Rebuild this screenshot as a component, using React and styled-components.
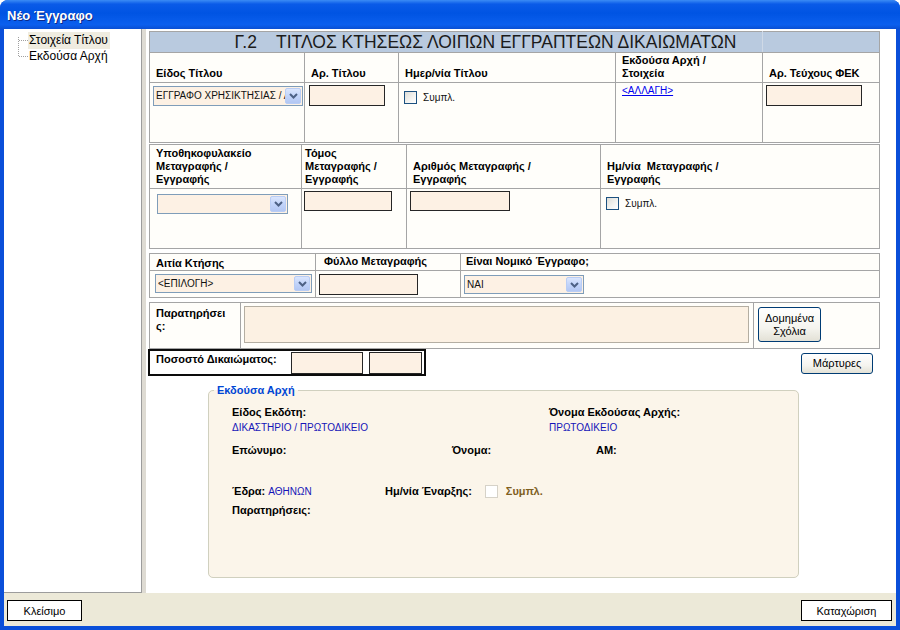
import styled, { createGlobalStyle } from "styled-components";

const GlobalStyle = createGlobalStyle`
  html, body { margin: 0; padding: 0; background: #ffffff; }
  body { font-family: "Liberation Sans", Arial, sans-serif; font-size: 11px; color: #000; }
  * { box-sizing: border-box; }
`;

const Window = styled.div`
  width: 900px;
  height: 630px;
  display: flex;
  flex-direction: column;
  background: #0a4fd9;
  border-radius: 8px 8px 0 0;
  overflow: hidden;
`;

const TitleBar = styled.div`
  height: 29px;
  flex: none;
  display: flex;
  align-items: center;
  padding: 2px 0 0 7px;
  background: linear-gradient(180deg, #3b8cf5 0%, #0a5be8 14%, #0054e3 45%, #0b5fee 85%, #0a4fd3 100%);
  color: #fff;
  font: bold 13px "Liberation Sans", Arial, sans-serif;
  text-shadow: 1px 1px #0b2a8a;
`;

const Frame = styled.div`
  flex: 1;
  display: flex;
  flex-direction: column;
  margin: 0 4px 4px 4px;
  background: #ece9d8;
  min-height: 0;
`;

const Body = styled.div`
  flex: 1;
  display: flex;
  min-height: 0;
`;

const Tree = styled.div`
  width: 138px;
  background: #fff;
  border-right: 1px solid #9c9c9c;
  border-bottom: 1px solid #9c9c9c;
  padding-top: 3px;
  position: relative;
  &::before {
    content: "";
    position: absolute;
    left: 14px;
    top: 8px;
    height: 19px;
    border-left: 1px dotted #a0a0a0;
  }
`;

const TreeItem = styled.div`
  display: flex;
  align-items: center;
  height: 16px;
  padding-left: 15px;
`;

const Branch = styled.span`
  width: 9px;
  border-bottom: 1px dotted #a0a0a0;
`;

const TreeLabel = styled.span`
  padding: 1px 2px 2px 1px;
  font-size: 12px;
  background: ${p => (p.$selected ? "#efece0" : "transparent")};
`;

const Splitter = styled.div`
  width: 4px;
  background: #dedbd3;
`;

const Main = styled.div`
  flex: 1;
  background: #fff;
  padding: 2px 0 0 3px;
`;

const Grid = styled.table`
  width: 730px;
  border-collapse: collapse;
  table-layout: fixed;
  margin-top: ${p => p.$gap || 0}px;
  background: #fffefa;
`;

const Row = styled.tr`
  height: ${p => p.$h}px;
`;

const HeaderCell = styled.td`
  background: #b9cadf;
  border: 1px solid #a5a5a5;
  border-right-color: #cfd9e6;
  font-size: 17.5px;
  color: #1b1b1b;
  padding: 0 0 0 59px;
  text-align: center;
  white-space: pre;
  line-height: 18px;
`;

const HeaderBlank = styled.td`
  background: #b9cadf;
  border: 1px solid #a5a5a5;
  border-left-color: #cfd9e6;
`;

const Th = styled.td`
  border: 1px solid #a5a5a5;
  padding: ${p => p.$pad || "0 4px 2px 6px"};
  font-weight: bold;
  font-size: 11px;
  line-height: 13px;
  vertical-align: ${p => p.$valign || "bottom"};
  text-align: left;
  color: #000;
`;

const Td = styled.td`
  border: 1px solid #a5a5a5;
  padding: ${p => p.$pad || "3px"};
  vertical-align: top;
`;

const Inline = styled.div`
  display: flex;
  align-items: center;
  gap: ${p => p.$gap || 6}px;
`;

const TextBox = styled.div`
  width: ${p => p.$w}px;
  height: ${p => p.$h || 21}px;
  margin-left: ${p => p.$ml || 0}px;
  border: 1px solid #262626;
  background: #fdf1e4;
`;

const Memo = styled.div`
  width: ${p => p.$w}px;
  height: ${p => p.$h}px;
  border: 1px solid #b4aea2;
  background: #fcf1e3;
`;

const Combo = styled.div`
  width: ${p => p.$w}px;
  height: ${p => p.$h || 20}px;
  border: 1px solid #7f9db9;
  background: #fdf1e4;
  display: flex;
  align-items: stretch;
  padding: 1px;
`;

const ComboText = styled.span`
  flex: 1;
  overflow: hidden;
  white-space: nowrap;
  font-size: 10px;
  line-height: 16px;
  padding-left: 1px;
  color: #111;
`;

const ComboButton = styled.span`
  width: 16px;
  flex: none;
  display: flex;
  align-items: center;
  justify-content: center;
  border-radius: 2px;
  background: linear-gradient(180deg, #dbe6fd 0%, #c2d4fa 50%, #b3c7f3 100%);
  border: 1px solid #b9cdf5;
`;

const Check = styled.span`
  width: 13px;
  height: 13px;
  flex: none;
  border: 1px solid ${p => (p.$muted ? "#d6d2c8" : "#1c5180")};
  background: ${p => (p.$muted ? "#fff" : "linear-gradient(135deg, #dcdcd7 0%, #f4f4f1 60%, #fff 100%)")};
`;

const Small = styled.span`
  font-size: ${p => p.$size || 10}px;
  color: ${p => p.$color || "#111"};
  font-weight: ${p => (p.$bold ? "bold" : "normal")};
`;

const Link = styled.a`
  font-size: 10px;
  color: #0000ee;
  text-decoration: underline;
`;

const XpButton = styled.button`
  width: ${p => p.$w}px;
  height: ${p => p.$h}px;
  border: 1px solid #003c74;
  border-radius: 3px;
  background: linear-gradient(180deg, #ffffff 0%, #f5f4ef 60%, #e3e1d6 100%);
  font: 11px "Liberation Sans", Arial, sans-serif;
  line-height: 13px;
  color: #000;
  padding: 0;
  margin: ${p => p.$m || 0};
`;

const ShareRow = styled.div`
  width: 730px;
  display: flex;
  align-items: flex-start;
  margin-top: 0;
`;

const ShareBox = styled.div`
  width: 278px;
  height: 27px;
  margin-left: -1px;
  border: 2px solid #0c0c0c;
  display: flex;
  align-items: flex-start;
  padding: 1px 0 0 6px;
`;

const ShareLabel = styled.span`
  width: 135px;
  font-weight: bold;
  font-size: 11px;
  padding-top: 1px;
`;

const Group = styled.fieldset`
  margin: 8px 0 0 59px;
  width: 591px;
  height: 194px;
  border: 1px solid #d0d0bf;
  border-radius: 5px;
  background: #fbf5ea;
  padding: 0 0 0 23px;
`;

const GroupTitle = styled.legend`
  color: #0046d5;
  font-weight: bold;
  font-size: 11px;
  padding: 0 3px;
  margin-left: -18px;
`;

const InfoRow = styled.div`
  display: flex;
  align-items: flex-start;
  margin-top: ${p => p.$mt}px;
`;

const Field = styled.div`
  width: ${p => (p.$w ? `${p.$w}px` : "auto")};
  flex: none;
  display: flex;
  flex-direction: ${p => (p.$inline ? "row" : "column")};
  align-items: ${p => (p.$inline ? "center" : "flex-start")};
  gap: ${p => (p.$inline ? 8 : 2)}px;
  line-height: 13px;
`;

const Label = styled.span`
  font-weight: bold;
  font-size: 11px;
  margin-right: ${p => p.$mr || 0}px;
`;

const Value = styled.span`
  font-size: 10px;
  color: #1414b8;
`;

const Footer = styled.div`
  height: 33px;
  flex: none;
  display: flex;
  justify-content: space-between;
  padding: 7px 4px 0 3px;
`;

const PlainButton = styled.button`
  width: ${p => p.$w}px;
  height: 21px;
  background: #fff;
  border: 1px solid #000;
  font: 11px "Liberation Sans", Arial, sans-serif;
  color: #000;
  padding: 0;
`;

const Chevron = () => (
  <svg width="9" height="6" viewBox="0 0 9 6">
    <path d="M1 1 L4.5 4.5 L8 1" fill="none" stroke="#4d6185" strokeWidth="2" />
  </svg>
);

const Select = ({ w, h, text }) => (
  <Combo $w={w} $h={h}>
    <ComboText>{text}</ComboText>
    <ComboButton><Chevron /></ComboButton>
  </Combo>
);

function App() {
  return (
    <>
      <GlobalStyle />
      <Window>
        <TitleBar>Νέο Έγγραφο</TitleBar>
        <Frame>
          <Body>
            <Tree>
              <TreeItem><Branch /><TreeLabel $selected>Στοιχεία Τίτλου</TreeLabel></TreeItem>
              <TreeItem><Branch /><TreeLabel>Εκδούσα Αρχή</TreeLabel></TreeItem>
            </Tree>
            <Splitter />
            <Main>
              <Grid>
                <colgroup>
                  <col style={{ width: 155 }} />
                  <col style={{ width: 94 }} />
                  <col style={{ width: 217 }} />
                  <col style={{ width: 147 }} />
                  <col style={{ width: 117 }} />
                </colgroup>
                <tbody>
                  <Row $h={21}>
                    <HeaderCell colSpan={4}>{"Γ.2    ΤΙΤΛΟΣ ΚΤΗΣΕΩΣ ΛΟΙΠΩΝ ΕΓΓΡΑΠΤΕΩΝ ΔΙΚΑΙΩΜΑΤΩΝ"}</HeaderCell>
                    <HeaderBlank />
                  </Row>
                  <Row $h={30}>
                    <Th>Είδος Τίτλου</Th>
                    <Th>Αρ. Τίτλου</Th>
                    <Th>Ημερ/νία Τίτλου</Th>
                    <Th>Εκδούσα Αρχή /<br />Στοιχεία</Th>
                    <Th>Αρ. Τεύχους ΦΕΚ</Th>
                  </Row>
                  <Row $h={60}>
                    <Td $pad="3px 2px 0 3px"><Select w={150} h={20} text="ΕΓΓΡΑΦΟ ΧΡΗΣΙΚΤΗΣΙΑΣ / ΑΝΑΓΝΩΡΙΣΗ" /></Td>
                    <Td $pad="2px 0 0 4px"><TextBox $w={76} /></Td>
                    <Td $pad="8px 0 0 5px">
                      <Inline><Check /><Small>Συμπλ.</Small></Inline>
                    </Td>
                    <Td $pad="1px 0 0 6px"><Link>&lt;ΑΛΛΑΓΗ&gt;</Link></Td>
                    <Td $pad="2px 0 0 3px"><TextBox $w={96} /></Td>
                  </Row>
                </tbody>
              </Grid>

              <Grid $gap={1}>
                <colgroup>
                  <col style={{ width: 152 }} />
                  <col style={{ width: 105 }} />
                  <col style={{ width: 194 }} />
                  <col style={{ width: 279 }} />
                </colgroup>
                <tbody>
                  <Row $h={44}>
                    <Th>Υποθηκοφυλακείο<br />Μεταγραφής /<br />Εγγραφής</Th>
                    <Th $pad="0 4px 2px 3px">Τόμος<br />Μεταγραφής /<br />Εγγραφής</Th>
                    <Th>Αριθμός Μεταγραφής /<br />Εγγραφής</Th>
                    <Th>Ημ/νία&nbsp; Μεταγραφής /<br />Εγγραφής</Th>
                  </Row>
                  <Row $h={60}>
                    <Td $pad="5px 0 0 7px"><Select w={131} h={20} text="" /></Td>
                    <Td $pad="2px 0 0 2px"><TextBox $w={88} $h={20} /></Td>
                    <Td $pad="2px 0 0 3px"><TextBox $w={100} $h={20} /></Td>
                    <Td $pad="8px 0 0 5px">
                      <Inline><Check /><Small>Συμπλ.</Small></Inline>
                    </Td>
                  </Row>
                </tbody>
              </Grid>

              <Grid $gap={4}>
                <colgroup>
                  <col style={{ width: 166 }} />
                  <col style={{ width: 145 }} />
                  <col style={{ width: 419 }} />
                </colgroup>
                <tbody>
                  <Row $h={17}>
                    <Th $pad="0 4px 0 6px">Αιτία Κτήσης</Th>
                    <Th $valign="top" $pad="1px 4px 0 8px">Φύλλο Μεταγραφής</Th>
                    <Th $valign="top" $pad="1px 4px 0 5px">Είναι Νομικό Έγγραφο;</Th>
                  </Row>
                  <Row $h={27}>
                    <Td $pad="3px 0 0 5px"><Select w={157} h={19} text="<ΕΠΙΛΟΓΗ>" /></Td>
                    <Td $pad="3px 0 0 3px"><TextBox $w={99} /></Td>
                    <Td $pad="4px 0 0 3px"><Select w={120} h={19} text="ΝΑΙ" /></Td>
                  </Row>
                </tbody>
              </Grid>

              <Grid $gap={4}>
                <colgroup>
                  <col style={{ width: 91 }} />
                  <col style={{ width: 513 }} />
                  <col style={{ width: 126 }} />
                </colgroup>
                <tbody>
                  <Row $h={46}>
                    <Th $valign="top" $pad="4px 4px 0 6px">Παρατηρήσει<br />ς:</Th>
                    <Td $pad="3px 0 0 3px"><Memo $w={505} $h={37} /></Td>
                    <Td $pad="4px 0 0 4px"><XpButton $w={63} $h={35}>Δομημένα<br />Σχόλια</XpButton></Td>
                  </Row>
                </tbody>
              </Grid>

              <ShareRow>
                <ShareBox>
                  <ShareLabel>Ποσοστό Δικαιώματος:</ShareLabel>
                  <TextBox $w={72} $h={22} />
                  <TextBox $w={53} $h={22} $ml={6} />
                </ShareBox>
                <XpButton $w={72} $h={21} $m="4px 6px 0 auto">Μάρτυρες</XpButton>
              </ShareRow>

              <Group>
                <GroupTitle>Εκδούσα Αρχή</GroupTitle>
                <InfoRow $mt={10}>
                  <Field $w={317}>
                    <Label>Είδος Εκδότη:</Label>
                    <Value>ΔΙΚΑΣΤΗΡΙΟ / ΠΡΩΤΟΔΙΚΕΙΟ</Value>
                  </Field>
                  <Field>
                    <Label>Όνομα Εκδούσας Αρχής:</Label>
                    <Value>ΠΡΩΤΟΔΙΚΕΙΟ</Value>
                  </Field>
                </InfoRow>
                <InfoRow $mt={10}>
                  <Field $w={220}><Label>Επώνυμο:</Label></Field>
                  <Field $w={144}><Label>Όνομα:</Label></Field>
                  <Field><Label>ΑΜ:</Label></Field>
                </InfoRow>
                <InfoRow $mt={28}>
                  <Field $w={153} $inline>
                    <span><Label>Έδρα: </Label><Value>ΑΘΗΝΩΝ</Value></span>
                  </Field>
                  <Field $inline>
                    <Label $mr={5}>Ημ/νία Έναρξης:</Label>
                    <Check $muted />
                    <Small $bold $size={11} $color="#7f5f1f">Συμπλ.</Small>
                  </Field>
                </InfoRow>
                <InfoRow $mt={6}>
                  <Field><Label>Παρατηρήσεις:</Label></Field>
                </InfoRow>
              </Group>
            </Main>
          </Body>
          <Footer>
            <PlainButton $w={75}>Κλείσιμο</PlainButton>
            <PlainButton $w={91}>Καταχώριση</PlainButton>
          </Footer>
        </Frame>
      </Window>
    </>
  );
}

export default App;
